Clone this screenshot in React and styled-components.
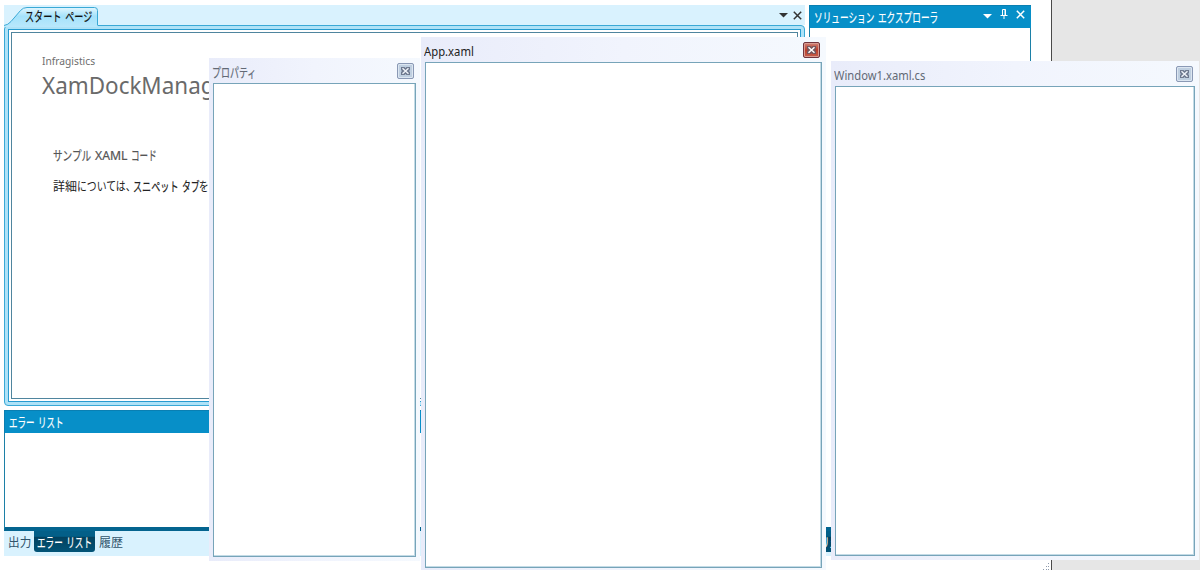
import React from "react";
import styled, { createGlobalStyle } from "styled-components";

export default function App() {
  return (
    <Desktop>
      <GlobalStyle />
      <MainWindow>
        <LeftColumn>
          <DocumentArea />
          <ErrorList />
        </LeftColumn>
        <SolutionExplorer />
        <Grip width="7" height="7" viewBox="0 0 7 7">
          <path d="M5 0h1v1h-1zM3 3h1v1h-1zM5 3h1v1h-1zM0 6h1v1h-1zM3 6h1v1h-1zM5 6h1v1h-1z" />
        </Grip>
      </MainWindow>

      <FloatingWindow $x={209} $y={58} $w={211} $h={503}>
        <FloatTitle>
          <Kana $w={45} $scale={0.69}>プロパティ</Kana>
          <CloseButton />
        </FloatTitle>
        <FloatBody />
      </FloatingWindow>
      <FloatingWindow $x={831} $y={61} $w={367.5} $h={499}>
        <FloatTitle>
          <Run $w={94} $scale={0.935}>Window1.xaml.cs</Run>
          <CloseButton />
        </FloatTitle>
        <FloatBody />
      </FloatingWindow>
      <FloatingWindow $x={421} $y={37} $w={405} $h={535}>
        <FloatTitle $active>
          <Run $w={52} $scale={0.94}>App.xaml</Run>
          <CloseButton active />
        </FloatTitle>
        <FloatBody />
      </FloatingWindow>
    </Desktop>
  );
}

function DocumentArea() {
  return (
    <Documents>
      <TabStrip>
        <DocumentTab>
          <svg width="96" height="22" viewBox="0 0 96 22">
            <defs>
              <linearGradient id="tab" x1="0" y1="0" x2="0" y2="1">
                <stop offset="0" stopColor="#e2f6fe" />
                <stop offset="0.45" stopColor="#a4e2fb" />
                <stop offset="1" stopColor="#b9e8fc" />
              </linearGradient>
            </defs>
            <path
              d="M0 22V20.5Q4 20 7 16.5L16.5 5.5Q19 2.5 23 2.5H90.5Q93.5 2.5 93.5 5.5V22Z"
              fill="url(#tab)"
            />
            <path
              d="M0 20.5Q4 20 7 16.5L16.5 5.5Q19 2.5 23 2.5H90.5Q93.5 2.5 93.5 5.5V20"
              fill="none"
              stroke="#3aa9d6"
            />
          </svg>
          <TabText>
            <Kana $w={68} $scale={0.7}>スタート ページ</Kana>
          </TabText>
        </DocumentTab>
        <StripIcons>
          <svg width="9" height="5" viewBox="0 0 9 5">
            <path d="M0 0h9L4.5 4.5z" fill="#333" />
          </svg>
          <svg width="9" height="9" viewBox="0 0 9 9">
            <path d="M.8.8l7.4 7.4M8.2.8L.8 8.2" stroke="#333" strokeWidth="1.5" />
          </svg>
        </StripIcons>
      </TabStrip>
      <Frame>
        <FrameInner>
          <Page>
            <Brand>
              <Run $w={55} $scale={0.93}>Infragistics</Run>
            </Brand>
            <Heading>
              <Run $w={200} $scale={0.975}>XamDockManager</Run>
            </Heading>
            <Subject>
              <Kana $w={42} $scale={0.74}>サンプル</Kana>
              <Run $w={36} $scale={1.02}>XAML</Run>
              <Kana $w={30} $scale={0.66}>コード</Kana>
            </Subject>
            <Detail>
              <Run $w={24} $scale={1}>詳細</Run>
              <Run $w={56} $scale={0.82}>については、</Run>
              <Kana $w={49} $scale={0.7}>スニペット</Kana>
              <Kana $w={17} $scale={0.68}>タブ</Kana>
              <Run $w={10} $scale={0.8}>を</Run>
            </Detail>
          </Page>
        </FrameInner>
      </Frame>
    </Documents>
  );
}

function ErrorList() {
  return (
    <Pane $h={146}>
      <PaneHeader>
        <Kana $w={56} $scale={0.655}>エラー リスト</Kana>
      </PaneHeader>
      <PaneBody />
      <PaneTabs>
        <PaneTab $w={30}>
          <Run $w={24} $scale={0.97}>出力</Run>
        </PaneTab>
        <PaneTab $w={61} $selected>
          <Kana $w={56} $scale={0.66}>エラー リスト</Kana>
        </PaneTab>
        <PaneTab $w={30}>
          <Run $w={24} $scale={1}>履歴</Run>
        </PaneTab>
      </PaneTabs>
    </Pane>
  );
}

function SolutionExplorer() {
  return (
    <Explorer>
      <PaneHeader>
        <Kana $w={126} $scale={0.665}>ソリューション エクスプローラ</Kana>
        <HeaderIcons>
          <Caret width="9" height="5" viewBox="0 0 9 5">
            <path d="M0 0h9L4.5 4.5z" fill="#fff" />
          </Caret>
          <svg width="8" height="11" viewBox="0 0 8 11">
            <path d="M2.5 6V.5h3V6M5 .5V6M.5 6.5h7M4 6.5V10" fill="none" stroke="#fff" />
          </svg>
          <svg width="9" height="9" viewBox="0 0 9 9">
            <path d="M.8.8l7.4 7.4M8.2.8L.8 8.2" stroke="#fff" strokeWidth="1.5" />
          </svg>
        </HeaderIcons>
      </PaneHeader>
      <PaneBody />
      <PaneTabs>
        <PaneTab $w={128} $selected>
          <Kana $w={126} $scale={0.665}>ソリューション エクスプローラ</Kana>
        </PaneTab>
      </PaneTabs>
    </Explorer>
  );
}

function CloseButton({ active }) {
  return (
    <CloseBox $active={active}>
      <svg width="9" height="8" viewBox="0 0 9 8">
        <path
          d="M0 0h3.5l1 1 1-1H9v3L8 4l1 1v3H5.5l-1-1-1 1H0V5l1-1-1-1z"
          fill={active ? "#75555c" : "#6d788e"}
        />
        <path
          d="M1.5 1.3l6 5.4M7.5 1.3l-6 5.4"
          stroke={active ? "#fff" : "#eef2f8"}
          strokeWidth="1.5"
        />
      </svg>
    </CloseBox>
  );
}

const GlobalStyle = createGlobalStyle`
  * {
    box-sizing: border-box;
  }
  body {
    margin: 0;
    overflow: hidden;
    font-family: "Noto Sans", "Noto Sans CJK JP", sans-serif;
    font-size: 12px;
  }
  svg {
    display: block;
    flex: none;
  }
`;

const Desktop = styled.div`
  position: relative;
  width: 1200px;
  height: 570px;
  overflow: hidden;
  background: #e6e6e6;
`;

const MainWindow = styled.div`
  display: flex;
  gap: 4px;
  width: 1052px;
  height: 570px;
  padding: 5px 0 0 4px;
  border-right: 1px solid #4a4a4a;
  background: #fff;
`;

const LeftColumn = styled.div`
  display: flex;
  flex-direction: column;
  gap: 4px;
  width: 801px;
`;

/* The katakana of the UI face is narrower than its kanji, so each run is scaled on its own. */
const Run = styled.span`
  display: inline-block;
  flex: none;
  width: ${(p) => p.$w}px;
  white-space: nowrap;
  transform: scaleX(${(p) => p.$scale});
  transform-origin: 0 50%;
`;

const Kana = styled(Run)`
  margin-top: -1px;
  font-size: 13px;
  word-spacing: 2px;
  vertical-align: top;
  -webkit-text-stroke-width: 0.2px;
`;

const Documents = styled.div`
  height: 401px;
`;

const TabStrip = styled.div`
  display: flex;
  justify-content: space-between;
  height: 20px;
  background: #d9f2fe;
`;

const DocumentTab = styled.div`
  display: flex;
  width: 96px;
  height: 22px;
`;

const TabText = styled.div`
  margin-left: -75px;
  line-height: 24px;
  color: #111;
`;

const StripIcons = styled.div`
  display: flex;
  align-items: center;
  gap: 5px;
  padding-right: 3px;
`;

const Frame = styled.div`
  height: 381px;
  padding: 3px;
  border: 1px solid #3aa9d6;
  border-radius: 4px;
  background: #aee2f7;
`;

const FrameInner = styled.div`
  height: 100%;
  padding: 2px;
  border: 1px solid #269bd0;
  background: #fff;
`;

const Page = styled.div`
  height: 100%;
  padding: 20px 0 0 30px;
  border: 1px solid #4f859e;
  overflow: hidden;
`;

const Brand = styled.div`
  height: 16px;
  font-size: 11px;
  line-height: 16px;
  color: #6e6e6e;
`;

const Heading = styled.div`
  height: 34px;
  font-size: 23px;
  line-height: 32px;
  color: #6a6a6a;
`;

const Subject = styled.div`
  display: flex;
  height: 20px;
  margin: 43px 0 0 11px;
  line-height: 20px;
  color: #555;
  -webkit-text-stroke: 0.2px #555;
`;

const Detail = styled.div`
  display: flex;
  height: 20px;
  margin: 11px 0 0 11px;
  line-height: 20px;
  color: #222;
`;

const Pane = styled.div`
  display: flex;
  flex-direction: column;
  height: ${(p) => p.$h}px;
`;

const Explorer = styled(Pane)`
  width: 222px;
  height: 551px;
`;

const PaneHeader = styled.div`
  display: flex;
  justify-content: space-between;
  flex: none;
  height: 23px;
  padding: 1px 6px 0 4px;
  border-top: 1px solid #0a7fb2;
  border-left: 1px solid #0a7fb2;
  background: #078fc8;
  line-height: 22px;
  color: #fff;
`;

const HeaderIcons = styled.div`
  display: flex;
  align-items: center;
  gap: 8px;
  height: 15px;
`;

const Caret = styled.svg`
  margin-top: 4px;
`;

const PaneBody = styled.div`
  flex: 1;
  border: 1px solid #1c80a7;
  border-top: 0;
  border-bottom: 4px solid #03648f;
`;

const PaneTabs = styled.div`
  display: flex;
  height: 25px;
  background: #d9f2fe;
`;

const PaneTab = styled.div`
  height: ${(p) => (p.$selected ? 21 : 24)}px;
  width: ${(p) => p.$w}px;
  padding-left: ${(p) => (p.$selected ? 3 : 4)}px;
  line-height: 24px;
  color: ${(p) => (p.$selected ? "#fff" : "#31546b")};
  background: ${(p) =>
    p.$selected ? "linear-gradient(#035f88 0 25%, #02425f 30%, #035478)" : "none"};
  border-radius: 0 0 3px 3px;
`;

const Grip = styled.svg`
  align-self: flex-end;
  margin-left: 8px;
  fill: #8f9bad;
`;

const FloatingWindow = styled.div`
  position: absolute;
  left: ${(p) => p.$x}px;
  top: ${(p) => p.$y}px;
  width: ${(p) => p.$w}px;
  height: ${(p) => p.$h}px;
  display: flex;
  flex-direction: column;
  padding: 0 4px 4px;
  background: linear-gradient(90deg, #e9ecfa, #f1f4fd 50%, #f5f9fe);
`;

const FloatTitle = styled.div`
  display: flex;
  justify-content: space-between;
  flex: none;
  height: 25px;
  padding: 5px 2px 0 0;
  margin-left: -1px;
  line-height: 20px;
  color: ${(p) => (p.$active ? "#222" : "#626975")};
`;

const FloatBody = styled.div`
  flex: 1;
  border: 1px solid #77a4b9;
  box-shadow: inset -1px -1px 0 #c3dbe6;
  background: #fff;
`;

const CloseBox = styled.div`
  display: flex;
  align-items: center;
  justify-content: center;
  width: 17px;
  height: 16px;
  border: 1px solid ${(p) => (p.$active ? "#71353d" : "#8a99b5")};
  border-radius: 2px;
  box-shadow: inset 0 0 0 1px ${(p) => (p.$active ? "#d99b91" : "#dce6f1")};
  background: ${(p) =>
    p.$active ? "linear-gradient(#d18478, #b93c29 50%, #c7604d)" : "#bfcfe0"};
`;
